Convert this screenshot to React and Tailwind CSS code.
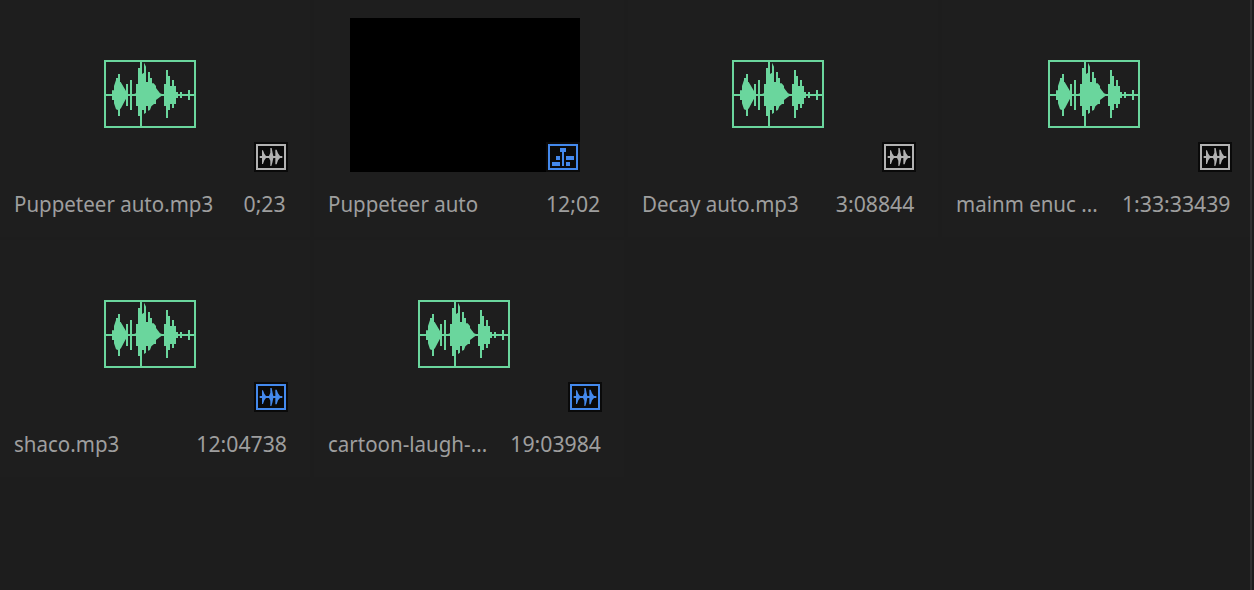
const WAVE =
  "M36 120L42 120V109H48V96L54 78V72H60V60H66V84H68L84 111V90H90V120H96V78H102V120H108L114 118V90H120V42H126V24H132V60L138 56V26L144 38V84H150V54H156V72H162V88H167L174 96V102L186 118L192 120H198V90H204V48H210V66H216V96H222V78H228V96H234V114H240V120H246V114H252V120H270V108H276V138H270V126H252V132H246V126H240V132H234V150H228V162H222V150H216V168H210V192H204V156H198V126H190L174 138V150H168L160 157L156 168L150 170V156H144V176L138 180V168H132V186H120V156H114V126H102V168H96V126H90V156H84V134L68 164H66V186H60V168L54 166L48 148V138H42V126H36Z";

function Waveform() {
  return (
    <svg className="block h-[68px] w-[92px] text-[#6ad69d]" viewBox="18 18 276 204" fill="currentColor">
      <path d="M18 18H294V222H18ZM24 24V216H288V24Z" fillRule="evenodd" />
      <path d="M24 120H288V126H24ZM126 24H132V216H126Z" />
      <path d={WAVE} />
    </svg>
  );
}

function Badge({ type, color }) {
  return (
    <div className={`bg-[#0a0a0a] p-[2px] ${color}`}>
      <svg className="block h-[26px] w-[30px]" viewBox="18 18 90 78" fill="currentColor">
        <path d="M18 18H108V96H18ZM24 24V90H102V24Z" fillRule="evenodd" />
        {type === "sequence" ? (
          <path d="M54 30H72V42H66V84H60V42H54ZM42 54H54V66H42ZM72 54H96V66H72ZM30 72H54V84H30ZM72 72H84V84H72Z" />
        ) : (
          <path d="M29 54H36V37H39L43 47L48 54H57L61 44V30H65L68 46L70 54H76V35H80L84 46L90 54H97V60H90L84 67L80 79H76V60H70L67 74L64 84H61V68L57 60H48L43 67L39 78H36V60H29Z" />
        )}
      </svg>
    </div>
  );
}

const gray = "text-[#b2b2b2]";
const blue = "text-[#4489ec]";

const clips = [
  { name: "Puppeteer auto.mp3", time: "0;23", color: gray, row: "w-[286px]" },
  { name: "Puppeteer auto", time: "12;02", color: blue, row: "w-[286px]", type: "sequence" },
  { name: "Decay auto.mp3", time: "3:08844", color: gray, row: "w-[286px]" },
  { name: "mainm enuc ...", time: "1:33:33439", color: gray, row: "w-[288px]", nudge: true },
  { name: "shaco.mp3", time: "12:04738", color: blue, row: "w-[287px]" },
  { name: "cartoon-laugh-...", time: "19:03984", color: blue, row: "w-[287px]" },
];

function Clip({ clip }) {
  return (
    <div className="h-[240px] w-[314px] shrink-0 pr-1 pb-[3px]">
      <div className="h-full bg-[#1e1e1e]">
        <div className="h-[178px]">
          {clip.type === "sequence" ? (
            <div className="pt-[18px] pl-9">
              <div className="flex h-[154px] w-[230px] items-end justify-end bg-black">
                <Badge type="sequence" color={clip.color} />
              </div>
            </div>
          ) : (
            <div className={clip.nudge ? "pl-[2px]" : ""}>
              <div className="pt-[60px] pl-[104px]">
                <Waveform />
              </div>
              <div className="flex pt-[14px] pl-[254px]">
                <Badge color={clip.color} />
              </div>
            </div>
          )}
        </div>
        <div className={`flex justify-between pt-[10px] pl-[14px] text-[22px] leading-[30px] whitespace-pre text-[#9e9e9e] ${clip.row}`}>
          <span className="origin-left scale-x-[0.932]">{clip.name}</span>
          <span className="origin-right scale-x-[0.965]">{clip.time}</span>
        </div>
      </div>
    </div>
  );
}

export default function App() {
  return (
    <div className="flex h-[590px] w-[1254px] overflow-hidden bg-[#1d1d1d] font-['Noto_Sans',sans-serif]">
      <div className="flex w-[1250px] shrink-0 flex-col">
        <div className="flex">
          {clips.slice(0, 4).map((c) => <Clip key={c.name} clip={c} />)}
        </div>
        <div className="flex">
          {clips.slice(4).map((c) => <Clip key={c.name} clip={c} />)}
        </div>
      </div>
      <div className="w-[2px] bg-[#303030]" />
      <div className="w-[2px] bg-[#1d1d1d]" />
    </div>
  );
}
